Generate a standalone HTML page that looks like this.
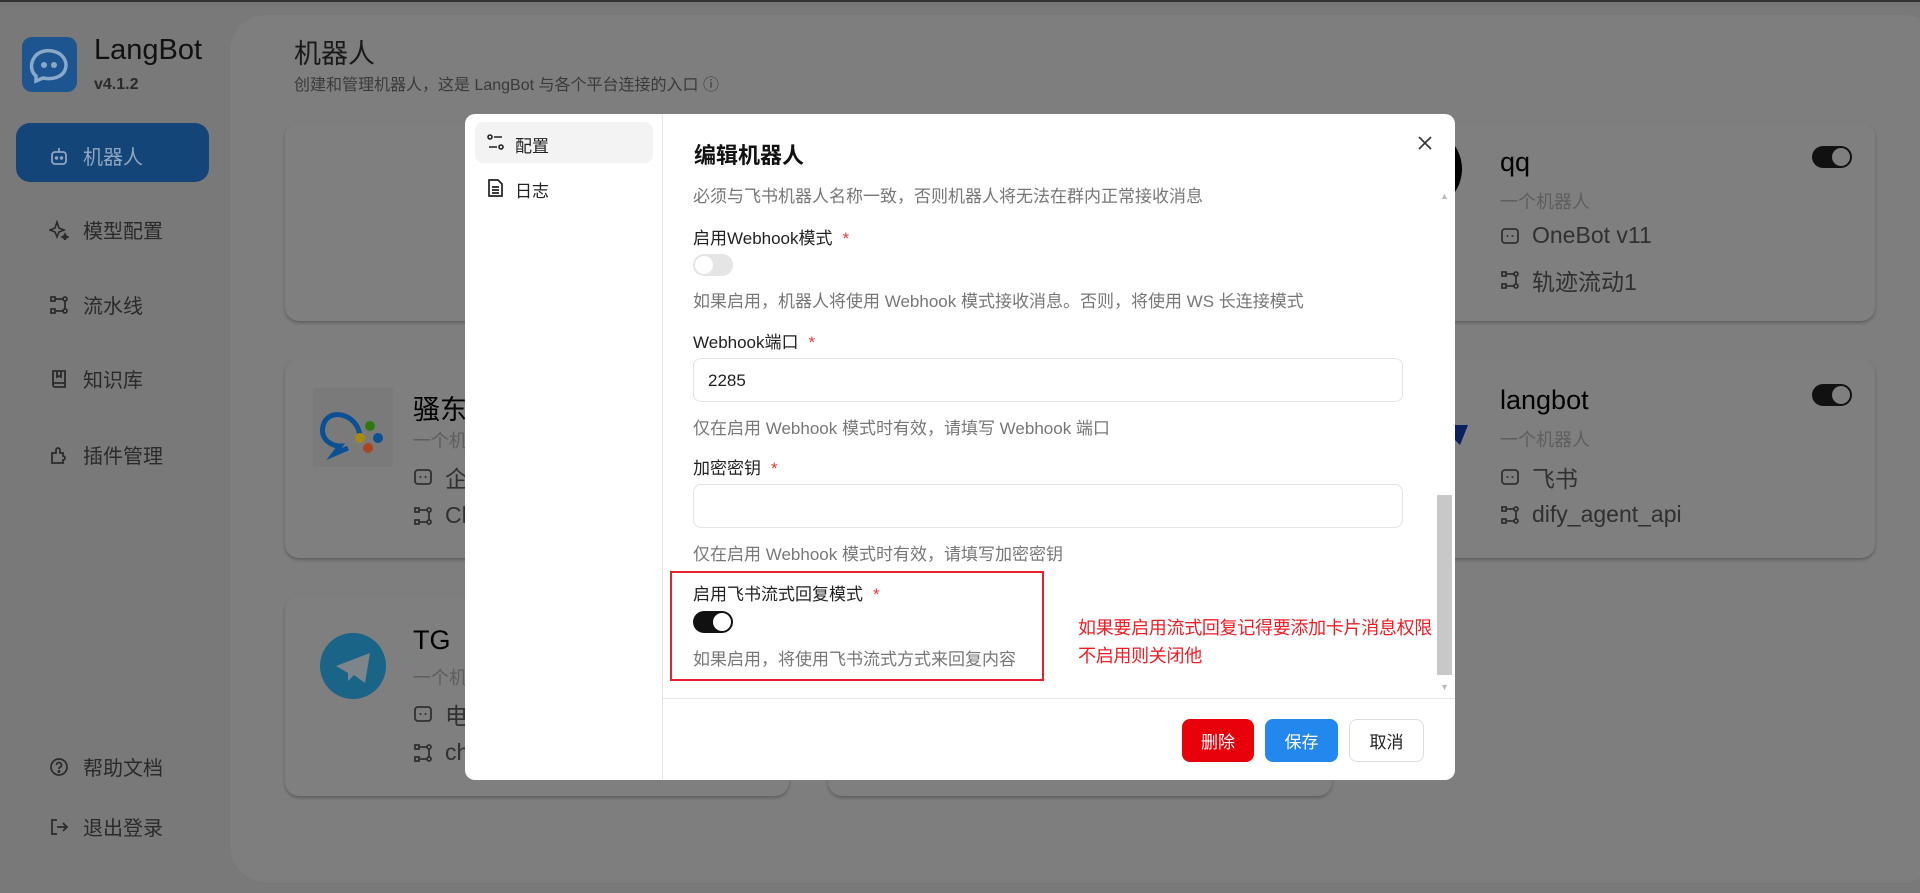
<!DOCTYPE html>
<html><head><meta charset="utf-8"><style>
*{box-sizing:border-box;margin:0;padding:0}
body{width:1920px;height:893px;overflow:hidden;background:#797979;font-family:"Liberation Sans","Noto Sans CJK SC",sans-serif;position:relative}
.a{position:absolute;white-space:nowrap}
.nav{position:absolute;left:49px;font-size:20px;color:#2a2a2a;display:flex;align-items:center;gap:14px}
.nav svg{width:20px;height:20px}
.card{position:absolute;background:#7f7f7f;border-radius:14px;box-shadow:0 2px 3px rgba(0,0,0,.25)}
.nm{position:absolute;font-size:27px;color:#000}
.sb{position:absolute;font-size:18px;color:#5e5e5e}
.ln{position:absolute;font-size:23px;color:#303030;display:flex;align-items:center;gap:12px}
.ln svg{width:20px;height:20px;flex:none}
.tg{position:absolute;width:40px;height:22px;border-radius:11px;background:#111}
.tg::after{content:"";position:absolute;right:2px;top:2px;width:18px;height:18px;border-radius:50%;background:#7f7f7f}
.lbl{position:absolute;left:693px;font-size:17px;color:#222}
.lbl b{color:#e33;font-weight:normal;margin-left:10px}
.hlp{position:absolute;left:693px;font-size:17px;color:#777}
.inp{position:absolute;left:693px;width:710px;height:44px;border:1px solid #e3e3e3;border-radius:8px;font-size:17px;padding:12px 14px;color:#222}
.btn{position:absolute;top:719px;height:43px;border-radius:8px;font-size:17px;display:flex;align-items:center;justify-content:center}
</style></head><body>
<svg width="0" height="0" style="position:absolute"><defs>
<symbol id="bot" viewBox="0 0 20 20"><rect x="2" y="3" width="16" height="14" rx="3" fill="none" stroke="#303030" stroke-width="1.8"/><circle cx="7.5" cy="10" r="1" fill="#303030"/><circle cx="12.5" cy="10" r="1" fill="#303030"/></symbol>
<symbol id="pipe" viewBox="0 0 20 20"><g fill="none" stroke="#303030" stroke-width="1.8"><rect x="2" y="2" width="4" height="4"/><rect x="2" y="14" width="4" height="4"/><circle cx="16" cy="4" r="2"/><circle cx="16" cy="16" r="2"/><path d="M6 4h8M6 16h8M16 6v8"/></g></symbol>
</defs></svg>
<div class="a" style="left:0;top:0;width:1920px;height:2px;background:#333"></div>
<!-- sidebar -->
<div class="a" style="left:22px;top:37px;width:55px;height:55px;border-radius:10px;background:#1c5590"></div>
<svg class="a" style="left:28px;top:46px" width="42" height="38" viewBox="0 0 42 38"><path d="M8 30 C3 26 2 18 6 12 C10 5 20 3 28 6 C36 9 40 17 37 24 C34 31 25 34 15 32 L8 35 Z" fill="none" stroke="#8aa8c8" stroke-width="3.5"/><circle cx="16" cy="19" r="3" fill="#8aa8c8"/><circle cx="26" cy="19" r="3" fill="#8aa8c8"/></svg>
<div class="a" style="left:94px;top:34px;font-size:29px;color:#111">LangBot</div>
<div class="a" style="left:94px;top:76px;font-size:16px;font-weight:bold;color:#2a2a2a">v4.1.2</div>
<div class="a" style="left:16px;top:123px;width:193px;height:59px;border-radius:14px;background:#144578"></div>
<div class="nav" style="top:141px;color:#8ea6c0"><svg viewBox="0 0 20 20" fill="none" stroke="#8ea6c0" stroke-width="1.8"><rect x="3" y="6" width="14" height="12" rx="3"/><path d="M10 2v4"/><circle cx="7.5" cy="12" r=".8"/><circle cx="12.5" cy="12" r=".8"/></svg>机器人</div>
<div class="nav" style="top:215px"><svg viewBox="0 0 20 20" fill="none" stroke="#2a2a2a" stroke-width="1.6"><path d="M8 2 L10 8 L15 10 L10 12 L8 17 L6 12 L1 10 L6 8Z"/><path d="M16 14l1 2 2 1-2 1-1 2-1-2-2-1 2-1z" fill="#2a2a2a"/></svg>模型配置</div>
<div class="nav" style="top:290px"><svg viewBox="0 0 20 20" fill="none" stroke="#2a2a2a" stroke-width="1.7"><rect x="2" y="2" width="4" height="4"/><rect x="2" y="14" width="4" height="4"/><circle cx="16" cy="4" r="2"/><circle cx="16" cy="16" r="2"/><path d="M6 4h8M6 16h8M16 6v8"/></svg>流水线</div>
<div class="nav" style="top:364px"><svg viewBox="0 0 20 20" fill="none" stroke="#2a2a2a" stroke-width="1.8"><path d="M4 2h12v16H6a2 2 0 0 1-2-2z"/><path d="M4 14h12M8 2v6l2-1 2 1V2"/></svg>知识库</div>
<div class="nav" style="top:440px"><svg viewBox="0 0 20 20" fill="none" stroke="#2a2a2a" stroke-width="1.8"><path d="M3 18V8h4V5a2 2 0 0 1 4 0v3h3v3a2 2 0 0 1 0 4v3z"/></svg>插件管理</div>
<div class="nav" style="top:752px"><svg viewBox="0 0 20 20" fill="none" stroke="#2a2a2a" stroke-width="1.7"><circle cx="10" cy="10" r="8"/><path d="M7.5 8a2.5 2.5 0 1 1 3.5 2.3c-.7.3-1 .8-1 1.7"/><circle cx="10" cy="14.5" r=".6" fill="#2a2a2a"/></svg>帮助文档</div>
<div class="nav" style="top:812px"><svg viewBox="0 0 20 20" fill="none" stroke="#2a2a2a" stroke-width="1.7"><path d="M8 3H3v14h5M8 10h10M14 6l4 4-4 4"/></svg>退出登录</div>
<!-- main panel -->
<div class="a" style="left:230px;top:15px;width:1710px;height:867px;border-radius:36px;background:#7e7e7e"></div>
<div class="a" style="left:294px;top:32px;font-size:27px;color:#1a1a1a">机器人</div>
<div class="a" style="left:294px;top:71px;font-size:16px;color:#3a3a3a">创建和管理机器人，这是 LangBot 与各个平台连接的入口 ⓘ</div>
<!-- cards -->
<div class="card" style="left:285px;top:122px;width:504px;height:199px"></div>
<div class="card" style="left:285px;top:359px;width:504px;height:199px"></div>
<div class="card" style="left:285px;top:596px;width:504px;height:200px"></div>
<div class="card" style="left:828px;top:596px;width:504px;height:200px"></div>
<div class="card" style="left:1371px;top:122px;width:504px;height:199px"></div>
<div class="card" style="left:1371px;top:359px;width:504px;height:199px"></div>
<div class="a" style="left:313px;top:388px;width:80px;height:79px;background:#7a7a7a"></div>
<svg class="a" style="left:318px;top:398px" width="72" height="64" viewBox="0 0 72 64"><path d="M42 38 C40 16 10 8 5 28 C2 42 14 48 22 48 L16 56 L30 50" fill="none" stroke="#0b4f95" stroke-width="5"/><circle cx="52" cy="28" r="5" fill="#2d7a14"/><circle cx="42" cy="40" r="5" fill="#a78b10"/><circle cx="60" cy="40" r="5" fill="#0b4f95"/><circle cx="50" cy="50" r="5" fill="#a9471a"/></svg>
<div class="nm" style="left:413px;top:388px">骚东西</div>
<div class="sb" style="left:413px;top:427px">一个机器人</div>
<div class="ln" style="left:413px;top:460px"><svg><use href="#bot"/></svg>企业微信</div>
<div class="ln" style="left:413px;top:502px"><svg><use href="#pipe"/></svg>ChatPipeline</div>
<svg class="a" style="left:320px;top:633px" width="66" height="66" viewBox="0 0 66 66"><circle cx="33" cy="33" r="33" fill="#1a6488"/><path d="M16 33 L50 20 L45 50 L34 42 L28 48 L28 40Z" fill="#7d858a"/></svg>
<div class="nm" style="left:413px;top:625px">TG</div>
<div class="sb" style="left:413px;top:664px">一个机器人</div>
<div class="ln" style="left:413px;top:697px"><svg><use href="#bot"/></svg>电报</div>
<div class="ln" style="left:413px;top:739px"><svg><use href="#pipe"/></svg>chat</div>
<div class="a" style="left:1380px;top:128px;width:82px;height:82px;border-radius:50%;background:#000"></div>
<svg class="a" style="left:1400px;top:410px" width="70" height="40"><path d="M40 15 L68 15 L60 35Z" fill="#0b2060"/></svg>
<div class="nm" style="left:1500px;top:147px">qq</div>
<div class="sb" style="left:1500px;top:188px">一个机器人</div>
<div class="ln" style="left:1500px;top:222px"><svg><use href="#bot"/></svg>OneBot v11</div>
<div class="ln" style="left:1500px;top:263px"><svg><use href="#pipe"/></svg>轨迹流动1</div>
<div class="tg" style="left:1812px;top:146px"></div>
<div class="nm" style="left:1500px;top:385px">langbot</div>
<div class="sb" style="left:1500px;top:426px">一个机器人</div>
<div class="ln" style="left:1500px;top:460px"><svg><use href="#bot"/></svg>飞书</div>
<div class="ln" style="left:1500px;top:501px"><svg><use href="#pipe"/></svg>dify_agent_api</div>
<div class="tg" style="left:1812px;top:384px"></div>
<!-- modal -->
<div class="a" style="left:465px;top:114px;width:990px;height:666px;border-radius:10px;background:#fff"></div>
<div class="a" style="left:662px;top:114px;width:1px;height:666px;background:#e6e6e6"></div>
<div class="a" style="left:475px;top:122px;width:178px;height:41px;border-radius:8px;background:#f3f3f3"></div>
<svg class="a" style="left:487px;top:134px" width="17" height="17" viewBox="0 0 17 17" fill="none" stroke="#222" stroke-width="1.6"><circle cx="3" cy="3" r="2"/><path d="M7 3h8M2 13h8"/><circle cx="14" cy="13" r="2"/></svg>
<div class="a" style="left:515px;top:132px;font-size:17px;color:#222">配置</div>
<svg class="a" style="left:487px;top:179px" width="17" height="18" viewBox="0 0 17 18" fill="none" stroke="#222" stroke-width="1.7"><path d="M2 1h9l4 4v12H2z"/><path d="M5 8h7M5 11h7M5 14h7"/></svg>
<div class="a" style="left:515px;top:177px;font-size:17px;color:#222">日志</div>
<div class="a" style="left:694px;top:138px;font-size:22px;font-weight:bold;color:#111">编辑机器人</div>
<svg class="a" style="left:1418px;top:136px" width="14" height="14" viewBox="0 0 14 14" stroke="#333" stroke-width="1.6"><path d="M1 1l12 12M13 1L1 13"/></svg>
<div class="hlp" style="top:182px">必须与飞书机器人名称一致，否则机器人将无法在群内正常接收消息</div>
<div class="lbl" style="top:224px">启用Webhook模式<b>*</b></div>
<div class="a" style="left:693px;top:254px;width:40px;height:22px;border-radius:11px;background:#e5e5e5"><div class="a" style="left:2px;top:2px;width:18px;height:18px;border-radius:50%;background:#fff"></div></div>
<div class="hlp" style="top:287px">如果启用，机器人将使用 Webhook 模式接收消息。否则，将使用 WS 长连接模式</div>
<div class="lbl" style="top:328px">Webhook端口<b>*</b></div>
<div class="inp" style="top:358px">2285</div>
<div class="hlp" style="top:414px">仅在启用 Webhook 模式时有效，请填写 Webhook 端口</div>
<div class="lbl" style="top:454px">加密密钥<b>*</b></div>
<div class="inp" style="top:484px"></div>
<div class="hlp" style="top:540px">仅在启用 Webhook 模式时有效，请填写加密密钥</div>
<div class="a" style="left:670px;top:571px;width:374px;height:110px;border:2px solid #e3222a"></div>
<div class="lbl" style="top:580px">启用飞书流式回复模式<b>*</b></div>
<div class="a" style="left:693px;top:611px;width:40px;height:22px;border-radius:11px;background:#111"><div class="a" style="right:2px;top:2px;width:18px;height:18px;border-radius:50%;background:#fff"></div></div>
<div class="hlp" style="top:645px">如果启用，将使用飞书流式方式来回复内容</div>
<div class="a" style="left:1078px;top:614px;font-size:18px;letter-spacing:-0.3px;color:#f01c24;line-height:28px">如果要启用流式回复记得要添加卡片消息权限<br>不启用则关闭他</div>
<div class="a" style="left:1437px;top:495px;width:15px;height:180px;background:#c8c8c8"></div>
<div class="a" style="left:1440px;top:191px;font-size:9px;color:#bbb">▲</div>
<div class="a" style="left:1440px;top:682px;font-size:9px;color:#bbb">▼</div>
<div class="a" style="left:663px;top:698px;width:792px;height:1px;background:#e6e6e6"></div>
<div class="btn" style="left:1182px;width:72px;background:#e8000b;color:#fff">删除</div>
<div class="btn" style="left:1265px;width:73px;background:#2288ee;color:#fff">保存</div>
<div class="btn" style="left:1349px;width:75px;border:1px solid #ddd;color:#222;background:#fff">取消</div>
</body></html>
